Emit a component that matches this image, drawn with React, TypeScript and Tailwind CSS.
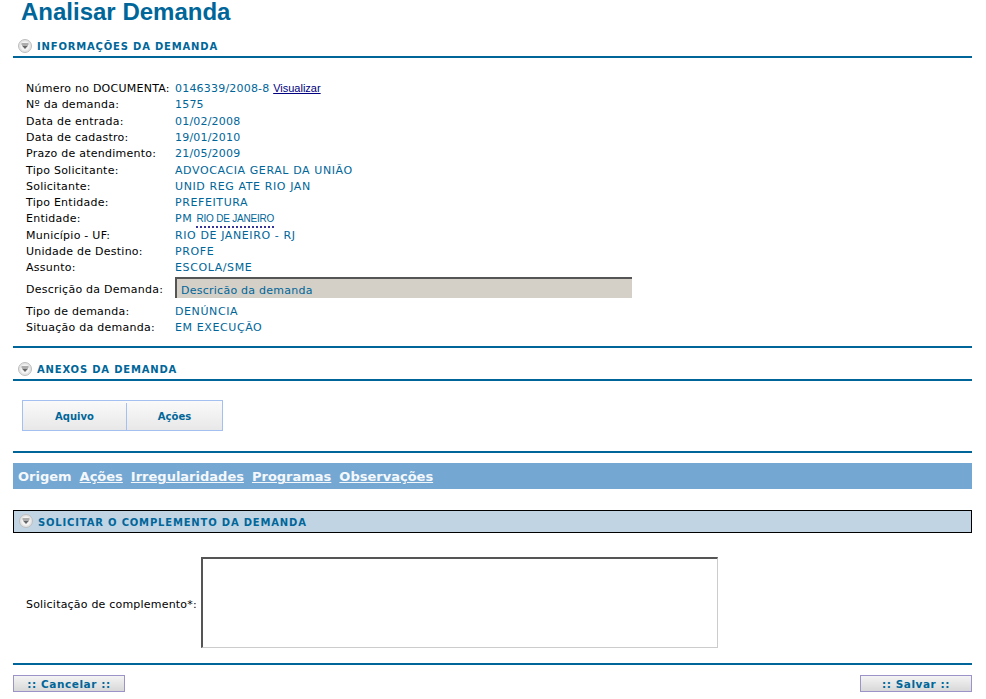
import React from 'react';

const rowsTop: [string, React.ReactNode, boolean][] = [
  ['Número no DOCUMENTA:', <>0146339/2008-8 <a href="#" className="font-['Liberation_Sans',sans-serif] tracking-normal text-[#000080] underline">Visualizar</a></>, false],
  ['Nº da demanda:', '1575', false],
  ['Data de entrada:', '01/02/2008', false],
  ['Data de cadastro:', '19/01/2010', false],
  ['Prazo de atendimento:', '21/05/2009', false],
  ['Tipo Solicitante:', 'ADVOCACIA GERAL DA UNIÃO', true],
  ['Solicitante:', 'UNID REG ATE RIO JAN', true],
  ['Tipo Entidade:', 'PREFEITURA', true],
  ['Entidade:', <>PM <span className="relative inline-block font-['Liberation_Sans',sans-serif] text-[10px] tracking-[-0.2px] after:absolute after:left-0 after:right-0 after:top-[12px] after:border-b-2 after:border-dotted after:border-[#333399]">RIO DE JANEIRO</span></>, true],
  ['Município - UF:', 'RIO DE JANEIRO - RJ', true],
  ['Unidade de Destino:', 'PROFE', true],
  ['Assunto:', 'ESCOLA/SME', true],
];

const rowsBottom: [string, string][] = [
  ['Tipo de demanda:', 'DENÚNCIA'],
  ['Situação da demanda:', 'EM EXECUÇÃO'],
];

function CollapseIcon() {
  return (
    <svg width="14" height="14" viewBox="0 0 14 14" className="shrink-0">
      <circle cx="7" cy="7" r="6.5" fill="#e4e4e4" stroke="#bdbdbd" />
      <circle cx="7" cy="7" r="4.5" fill="#f4f4f4" />
      <path d="M3.5 4.5h7v1h-7z" fill="#666" />
      <path d="M3.8 6.5h6.4L7 10z" fill="#666" />
    </svg>
  );
}

function SectionTitle({ children }: { children: React.ReactNode }) {
  return (
    <span className="pt-[2px] text-[10px] font-bold tracking-[0.82px] text-[#006699]">{children}</span>
  );
}

function Row({ label, caps, children }: { label: string; caps: boolean; children: React.ReactNode }) {
  return (
    <div className="flex h-[16.3px] items-center pl-[13px] leading-none">
      <span className="w-[149px] shrink-0 tracking-[0.25px] text-black">{label}</span>
      <span className={caps ? 'tracking-[0.6px] text-[#006699]' : 'tracking-[0.2px] text-[#006699]'}>{children}</span>
    </div>
  );
}

export default function App() {
  return (
    <div className="h-[699px] overflow-hidden bg-white px-[13px] font-['DejaVu_Sans',Verdana,sans-serif] text-[11px]">
      <div className="w-[959px]">
        <h1 className="h-[25px] pl-2 font-['Liberation_Sans',Arial,sans-serif] text-[24px] leading-[23px] font-bold text-[#006699]">
          Analisar Demanda
        </h1>

        <div className="mt-[13px] box-content flex h-[15px] items-center gap-[5px] border-b-2 border-[#006699] pb-[3px] pl-[5px]">
          <CollapseIcon />
          <SectionTitle>INFORMAÇÕES DA DEMANDA</SectionTitle>
        </div>

        <div className="pt-[22.4px]">
          {rowsTop.map(([label, value, caps]) => (
            <Row key={label} label={label} caps={caps}>{value}</Row>
          ))}
        </div>

        <div className="mt-[1.4px] flex h-[21px] items-center pl-[13px]">
          <span className="w-[149px] shrink-0 pt-[5px] tracking-[0.25px] text-black">Descrição da Demanda:</span>
          <div className="flex h-[21px] w-[457px] items-center border-t-2 border-l-2 border-t-[#555] border-l-[#555] bg-[#d4d0c8] pl-[4px] pt-[5px] tracking-[0.25px] text-[#006699]">
            Descricão da demanda
          </div>
        </div>

        <div className="mt-[5px]">
          {rowsBottom.map(([label, value]) => (
            <Row key={label} label={label} caps={true}>{value}</Row>
          ))}
        </div>

        <div className="mt-[10px] h-[2px] bg-[#006699]" />

        <div className="mt-[13px] box-content flex h-[16px] items-center gap-[5px] border-b-2 border-[#006699] pb-[2px] pl-[5px]">
          <CollapseIcon />
          <SectionTitle>ANEXOS DA DEMANDA</SectionTitle>
        </div>

        <div className="ml-[9px] mt-[19px] flex h-[31px] w-[201px] border border-[#a4c0f0] bg-gradient-to-b from-[#fafafa] to-[#e8e8e8] pt-[2px] text-[10px] font-bold text-[#006699]">
          <div className="flex w-[104px] items-center justify-center border-r border-[#a4c0f0]">Aquivo</div>
          <div className="flex flex-1 items-center justify-center">Ações</div>
        </div>

        <div className="mt-[20px] h-[2px] bg-[#006699]" />

        <div className="mt-[10px] flex h-[26px] items-center gap-[8px] bg-[#74a7d2] pl-[5px] pt-[2px] text-[13px] font-bold text-[#f4f8fb]">
          <span>Origem</span>
          <a href="#" className="underline">Ações</a>
          <a href="#" className="underline">Irregularidades</a>
          <a href="#" className="underline">Programas</a>
          <a href="#" className="underline">Observações</a>
        </div>

        <div className="mt-[21px] flex h-[23px] items-center gap-[5px] border border-black bg-[#c0d4e4] pl-[5px]">
          <CollapseIcon />
          <SectionTitle>SOLICITAR O COMPLEMENTO DA DEMANDA</SectionTitle>
        </div>

        <div className="mt-[24px] flex h-[91px] items-center pl-[13px]">
          <span className="w-[175px] shrink-0 pt-[6px] tracking-[0.2px] text-black">Solicitação de complemento*:</span>
          <div className="h-[91px] w-[517px] border border-t-2 border-l-2 border-[#cccccc] border-t-[#555] border-l-[#555] bg-white" />
        </div>

        <div className="mt-[15px] h-[2px] bg-[#006699]" />

        <div className="mt-[10px] flex justify-between">
          <button className="h-[17px] w-[112px] border border-[#9a94c8] bg-gradient-to-b from-[#f4f4f4] to-[#d8d8d8] pt-[2px] text-[10.5px] leading-none font-bold tracking-[0.55px] text-[#006699]">:: Cancelar ::</button>
          <button className="h-[17px] w-[112px] border border-[#9a94c8] bg-gradient-to-b from-[#f4f4f4] to-[#d8d8d8] pt-[2px] text-[10.5px] leading-none font-bold tracking-[0.55px] text-[#006699]">:: Salvar ::</button>
        </div>
      </div>
    </div>
  );
}
